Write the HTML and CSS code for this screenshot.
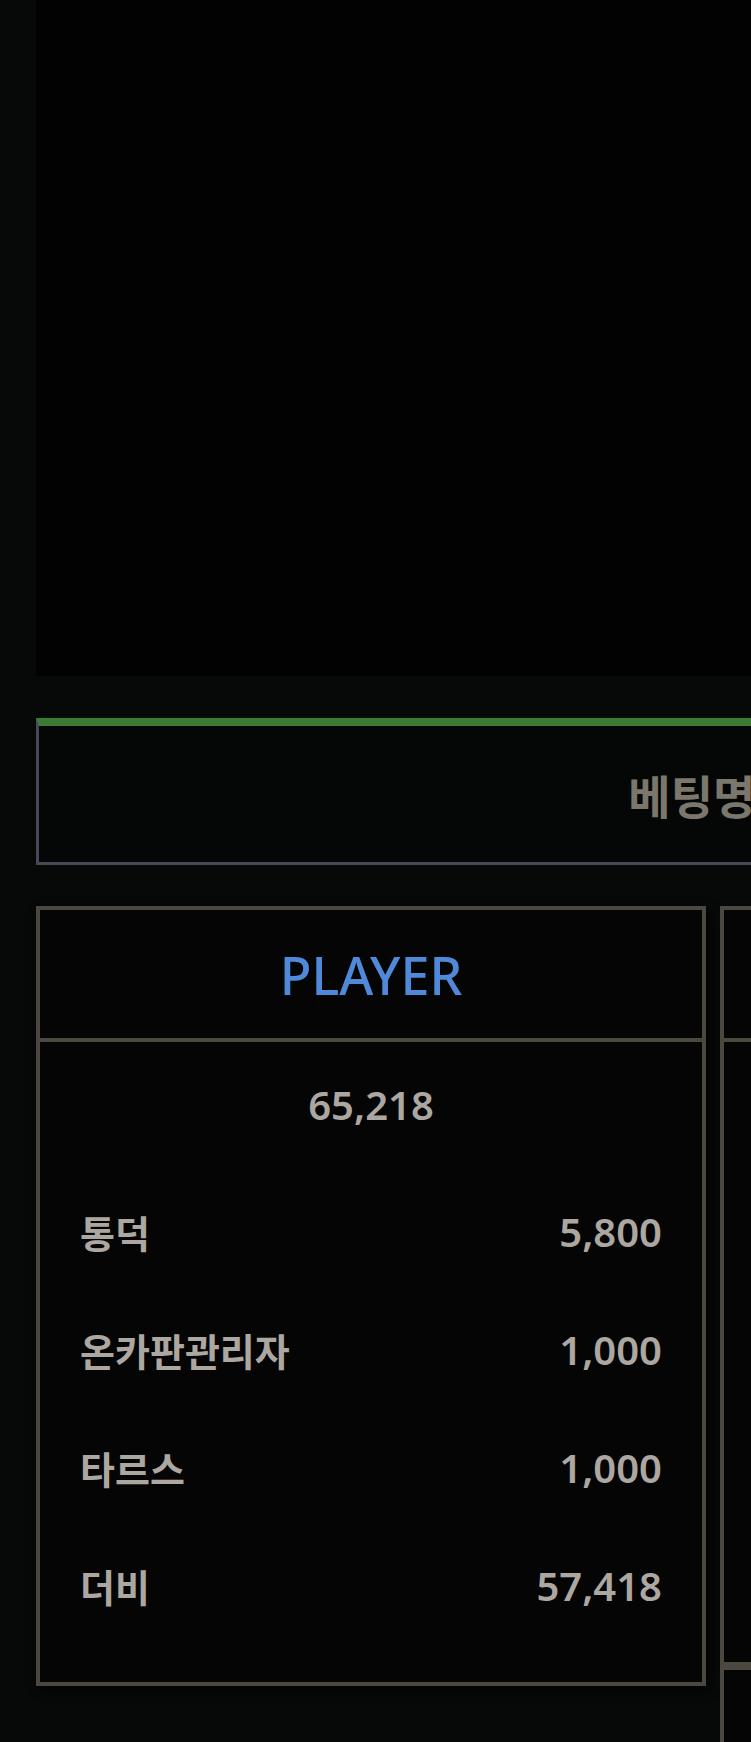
FILE: index.html
```html
<!DOCTYPE html>
<html lang="ko">
<head>
<meta charset="utf-8">
<title>베팅명단</title>
<link rel="stylesheet" href="styles.css">
</head>
<body>
<div class="page">
  <div class="video"></div>
  <div class="bet-title"><span class="bet-title__text">베팅명단</span></div>
  <div class="columns">
    <section class="col">
      <div class="col__head col__head--player">PLAYER</div>
      <div class="col__body">
        <div class="col__total">65,218</div>
        <ul class="rows">
          <li class="row"><span class="row__name">통덕</span><span class="row__amt">5,800</span></li>
          <li class="row"><span class="row__name">온카판관리자</span><span class="row__amt">1,000</span></li>
          <li class="row"><span class="row__name">타르스</span><span class="row__amt">1,000</span></li>
          <li class="row"><span class="row__name">더비</span><span class="row__amt">57,418</span></li>
        </ul>
      </div>
    </section>
    <section class="col col--banker">
      <div class="col__head col__head--banker">BANKER</div>
      <div class="col__body col__body--short">
        <div class="col__total">0</div>
        <ul class="rows">
          <li class="row"><span class="row__name">-</span><span class="row__amt">0</span></li>
          <li class="row"><span class="row__name">-</span><span class="row__amt">0</span></li>
          <li class="row"><span class="row__name">-</span><span class="row__amt">0</span></li>
          <li class="row"><span class="row__name">-</span><span class="row__amt">0</span></li>
        </ul>
      </div>
      <div class="col__foot">TIE</div>
    </section>
  </div>
</div>
</body>
</html>
```
FILE: styles.css
```css
html, body {
  margin: 0;
  padding: 0;
  overflow: hidden;
  background: #070909;
}
body {
  font-family: "Noto Sans", "Open Sans", "Noto Sans CJK KR", sans-serif;
  color: #aca8a1;
}
.page {
  margin-left: 36px;
  width: 1354px;
}
.video {
  height: 676px;
  background: #020202;
}
.bet-title {
  margin-top: 42px;
  height: 136px;
  border: 3px solid #454856;
  border-top: 8px solid #3d7b35;
  background: #050707;
  display: flex;
  align-items: center;
  justify-content: center;
}
.bet-title__text {
  font-family: "Noto Sans CJK KR", sans-serif;
  font-size: 46px;
  font-weight: 700;
  color: #7b776c;
}
.columns {
  margin-top: 41px;
  display: grid;
  grid-template-columns: 1fr 1fr;
  column-gap: 14px;
  align-items: start;
}
.col {
  border: 4px solid #4d483f;
  background: #050505;
  box-shadow: 4px 4px 10px rgba(0,0,0,0.9);
}
.col--banker {
  box-shadow: none;
}
.col__head {
  height: 128px;
  border-bottom: 4px solid #4d483f;
  display: flex;
  align-items: center;
  justify-content: center;
  font-size: 52px;
  font-weight: 500;
}
.col__head--player { color: #5088da; }
.col__head--banker { color: #d04a45; }
.col__body {
  padding: 0 40px 38px;
}
.col__body--short {
  padding-bottom: 18px;
}
.col__total {
  height: 125px;
  margin-bottom: 5px;
  display: flex;
  align-items: center;
  justify-content: center;
  font-size: 40px;
  font-weight: 600;
}
.rows {
  list-style: none;
  margin: 0;
  padding: 0;
}
.row {
  height: 118px;
  display: flex;
  align-items: center;
  justify-content: space-between;
}
.row__name {
  font-family: "Noto Sans CJK KR", sans-serif;
  font-size: 38px;
  font-weight: 700;
}
.row__amt {
  font-size: 40px;
  font-weight: 600;
}
.col__foot {
  height: 150px;
  border-top: 8px solid #4d483f;
  display: flex;
  align-items: center;
  justify-content: center;
  font-size: 42px;
  font-weight: 700;
  color: #3f9a4a;
}
```
